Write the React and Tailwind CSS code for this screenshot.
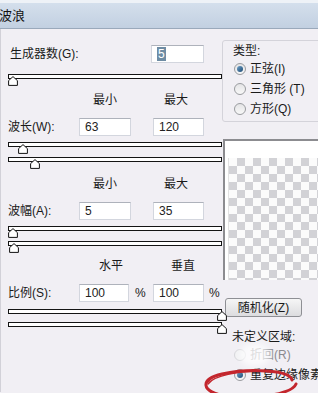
import React from 'react';

const FONT = "font-['Liberation_Sans','Noto_Sans_CJK_SC',sans-serif]";

const Field = ({ value, width = 'w-[52px]', selected }) => (
  <div className={`h-[18px] ${width} bg-white border border-[#d3d6de] border-t-[#aeb2bb] flex items-center pl-[5px] text-[12px] text-[#222]`}>
    {selected ? <span className="bg-[#6e8ca4] text-white px-[1px] leading-[14px]">{value}</span> : value}
  </div>
);

const Slider = ({ thumb, className = '' }) => (
  <div className={`relative h-[12px] w-[214px] ${className}`}>
    <div className="h-[5px] w-full border border-[#141414] bg-white" />
    <svg className="absolute top-[2px]" style={{ left: thumb }} width="10" height="10" viewBox="0 0 10 10">
      <path d="M5 0.6 L9.4 4.6 L9.4 9.4 L0.6 9.4 L0.6 4.6 Z" fill="#fff" stroke="#111" strokeWidth="1" />
    </svg>
  </div>
);

const Radio = ({ checked, label, faded }) => (
  <div className="h-[20px] flex items-center gap-[4px]">
    <span className={`w-[12px] h-[12px] rounded-full border flex items-center justify-center ${faded ? 'border-[#d6d6da] bg-[#f2f2f4]' : 'border-[#9a9ca0] bg-gradient-to-b from-[#e4e4e6] to-[#f8f8f8]'}`}>
      {checked && <span className="w-[6px] h-[6px] rounded-full bg-gradient-to-br from-[#6fa1c9] to-[#1c4a73]" />}
    </span>
    <span className={`text-[12px] whitespace-nowrap ${faded ? 'text-[#8a8a8e]' : 'text-[#1a1a1a]'}`}>{label}</span>
  </div>
);

const Heads = ({ a, b, first, gap }) => (
  <div className="h-[16px] flex items-center text-[12px] text-[#1a1a1a]">
    <span style={{ marginLeft: first }}>{a}</span>
    <span style={{ marginLeft: gap }}>{b}</span>
  </div>
);

export default function App() {
  return (
    <div className={`relative w-[318px] h-[393px] overflow-hidden bg-[#f1eff4] ${FONT}`}>
      {/* title bar */}
      <div className="h-[29px] border-t-[3px] border-[#eef2f7] border-b border-b-[#9aa9bb] bg-gradient-to-b from-[#d4dfec] to-[#c2d0e1] flex items-center">
        <span className="text-[13px] text-[#111] -ml-[1px]">波浪</span>
      </div>

      <div className="flex border-l border-[#d2d1d8] h-[363px]">
        {/* left column */}
        <div className="w-[236px] pl-[7px] flex flex-col">
          <div className="mt-[15px] h-[19px] flex items-center">
            <span className="w-[143px] text-[12px] pl-[2px] text-[#1a1a1a]">生成器数(G):</span>
            <Field value="5" selected width="w-[53px]" />
          </div>
          <Slider thumb={0} className="mt-[11px]" />

          <div className="mt-[6px]"><Heads a="最小" b="最大" first={85} gap={47} /></div>
          <div className="mt-[10px] h-[18px] flex items-center">
            <span className="w-[71px] text-[12px] text-[#1a1a1a]">波长(W):</span>
            <Field value="63" />
            <div className="w-[22px]" />
            <Field value="120" width="w-[51px]" />
          </div>
          <Slider thumb={10} className="mt-[6px]" />
          <Slider thumb={22} className="mt-[3px]" />

          <div className="mt-[7px]"><Heads a="最小" b="最大" first={85} gap={47} /></div>
          <div className="mt-[10px] h-[18px] flex items-center">
            <span className="w-[71px] text-[12px] text-[#1a1a1a]">波幅(A):</span>
            <Field value="5" />
            <div className="w-[22px]" />
            <Field value="35" width="w-[51px]" />
          </div>
          <Slider thumb={0} className="mt-[6px]" />
          <Slider thumb={1} className="mt-[3px]" />

          <div className="mt-[5px]"><Heads a="水平" b="垂直" first={91} gap={48} /></div>
          <div className="mt-[10px] h-[18px] flex items-center text-[12px] text-[#1a1a1a]">
            <span className="w-[71px]">比例(S):</span>
            <Field value="100" width="w-[50px]" />
            <span className="w-[24px] pl-[6px]">%</span>
            <Field value="100" width="w-[51px]" />
            <span className="pl-[5px]">%</span>
          </div>
          <Slider thumb={209} className="mt-[7px]" />
          <Slider thumb={209} className="mt-[1px]" />
        </div>

        {/* right column */}
        <div className="flex-1 flex flex-col">
          <div className="mt-[11px] h-[82px] w-[100px] border border-[#d4d3da] rounded-[3px] pl-[11px] pt-[2px]">
            <div className="h-[16px] flex items-center text-[12px] text-[#1a1a1a] -ml-[1px]">类型:</div>
            <Radio checked label="正弦(I)" />
            <Radio label="三角形 (T)" />
            <Radio label="方形(Q)" />
          </div>

          <div className="mt-[17px] ml-[1px] h-[141px] w-[100px] border-l-2 border-t-2 border-[#8c8c90] bg-white pt-[17px] pl-[3px]">
            <div className="w-full h-full border-l border-[#e2e2e2] bg-[image:conic-gradient(#d2d2d6_25%,#fbfbfb_0_50%,#d2d2d6_0_75%,#fbfbfb_0)] bg-[length:16px_16px]" />
          </div>

          <div className="mt-[18px] ml-[3px] h-[19px] w-[77px] border border-[#8e8f94] rounded-[3px] bg-gradient-to-b from-[#f6f6f6] to-[#dcdcdf] flex items-center justify-center text-[12px] text-[#1a1a1a]">
            随机化(Z)
          </div>

          <div className="mt-[12px] ml-[10px] h-[16px] flex items-center text-[12px] text-[#1a1a1a] whitespace-nowrap">未定义区域:</div>
          <div className="ml-[12px]">
            <Radio faded label="折回(R)" />
            <Radio checked label="重复边缘像素(E)" />
          </div>
        </div>
      </div>

      {/* watermark haze */}
      <div className="absolute left-[240px] top-[344px] w-[30px] h-[22px] rounded-full bg-white/70 blur-[3px] pointer-events-none" />

      {/* red marker ellipse */}
      <svg className="absolute inset-0 pointer-events-none" width="318" height="393" viewBox="0 0 318 393">
        <path d="M292 380 C290 370 250 368 222 374 C200 379 200 392 226 396 C255 400 292 394 296 384" fill="none" stroke="#c3262d" strokeWidth="3" strokeLinecap="round" />
        <path d="M262 371 C240 371 214 375 208 384" fill="none" stroke="#c3262d" strokeWidth="1.5" strokeLinecap="round" />
      </svg>
    </div>
  );
}
